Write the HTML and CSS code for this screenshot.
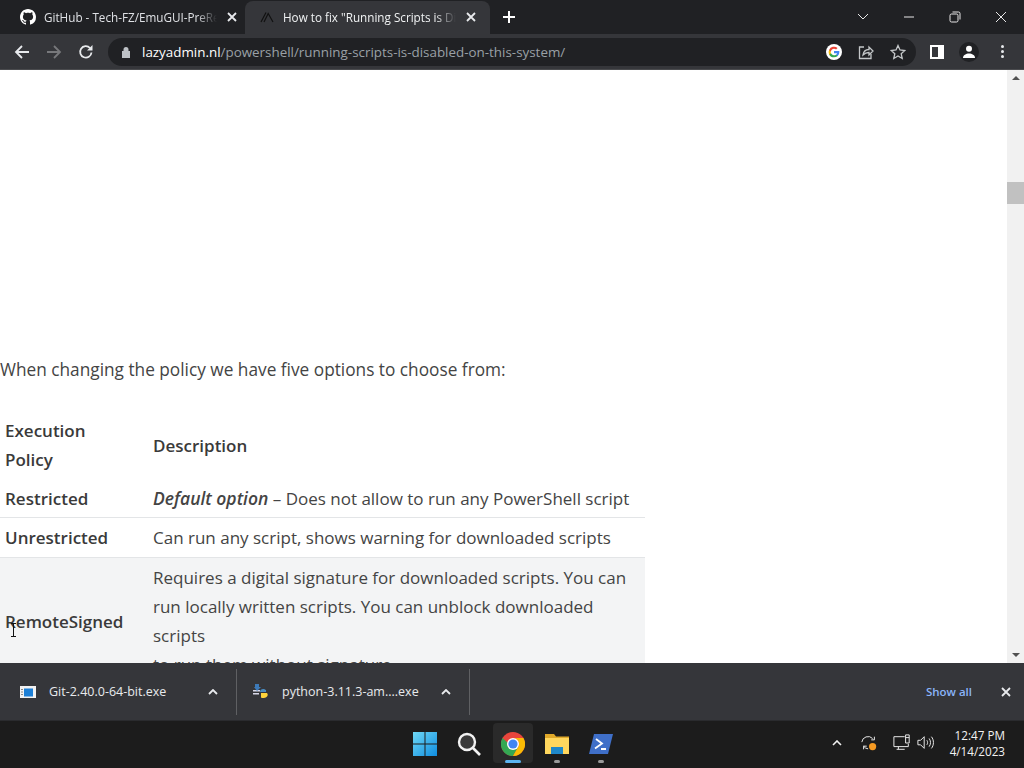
FILE: index.html
```html
<!DOCTYPE html>
<html lang="en">
<head>
    <meta charset="UTF-8">
    <meta name="viewport" content="width=device-width, initial-scale=1.0">
    <title>Running Scripts is Disabled</title>
    <link rel="stylesheet" href="styles.css">
</head>
<body>
    <div class="screen">

        <!-- Tab strip -->
        <div class="tabstrip">
            <div class="tab">
                <svg class="tab-icon" viewBox="0 0 16 16"><path fill="#fff" d="M8 0C3.58 0 0 3.58 0 8c0 3.54 2.29 6.53 5.47 7.59.4.07.55-.17.55-.38 0-.19-.01-.82-.01-1.49-2.01.37-2.53-.49-2.69-.94-.09-.23-.48-.94-.82-1.13-.28-.15-.68-.52-.01-.53.63-.01 1.08.58 1.23.82.72 1.21 1.87.87 2.33.66.07-.52.28-.87.51-1.07-1.78-.2-3.64-.89-3.64-3.95 0-.87.31-1.59.82-2.15-.08-.2-.36-1.02.08-2.12 0 0 .67-.21 2.2.82.64-.18 1.32-.27 2-.27s1.36.09 2 .27c1.53-1.04 2.2-.82 2.2-.82.44 1.1.16 1.92.08 2.12.51.56.82 1.27.82 2.15 0 3.07-1.87 3.75-3.65 3.95.29.25.54.73.54 1.48 0 1.07-.01 1.93-.01 2.2 0 .21.15.46.55.38A8.01 8.01 0 0 0 16 8c0-4.42-3.58-8-8-8z"/></svg>
                <span class="tab-title">GitHub - Tech-FZ/EmuGUI-PreRelease</span>
                <svg class="tab-close" viewBox="0 0 10 10"><path d="M1 1l8 8M9 1l-8 8"/></svg>
            </div>
            <div class="tab tab-active">
                <svg class="tab-icon" viewBox="0 0 16 16"><path fill="none" stroke="#111" stroke-width="1.200" d="M2 13L7 3.500M5 13L9.200 4.500 14 13"/></svg>
                <span class="tab-title">How to fix "Running Scripts is Disabled"</span>
                <svg class="tab-close" viewBox="0 0 10 10"><path d="M1 1l8 8M9 1l-8 8"/></svg>
            </div>
            <svg class="new-tab" viewBox="0 0 12 12"><path d="M6 0v12M0 6h12"/></svg>
            <div class="window-controls">
                <svg class="win-btn chevron" viewBox="0 0 12 8"><path d="M1 1l5 5 5-5"/></svg>
                <svg class="win-btn" viewBox="0 0 12 12"><path d="M1 6h10"/></svg>
                <svg class="win-btn" viewBox="0 0 12 12"><rect x="1" y="3" width="8" height="8" rx="1.5"/><path d="M3.5 1H9.5A1.5 1.5 0 0 1 11 2.5V8.500"/></svg>
                <svg class="win-btn" viewBox="0 0 12 12"><path d="M1 1l10 10M11 1L1 11"/></svg>
            </div>
        </div>

        <!-- Address bar -->
        <div class="toolbar">
            <div class="nav-buttons">
                <svg class="nav-icon" viewBox="0 0 16 16"><path d="M15 8H2M8 2L2 8l6 6"/></svg>
                <svg class="nav-icon disabled" viewBox="0 0 16 16"><path d="M1 8h13M8 2l6 6-6 6"/></svg>
                <svg class="nav-icon" viewBox="0 0 16 16"><path d="M13.500 8.500A5.700 5.700 0 1 1 12 4"/><path class="solid" d="M14.500 1v5.500H9z"/></svg>
            </div>
            <div class="omnibox">
                <svg class="lock" viewBox="0 0 10 12"><path d="M2.500 5V3.500a2.500 2.500 0 0 1 5 0V5H9v7H1V5z"/></svg>
                <span class="url"><b>lazyadmin.nl</b>/powershell/running-scripts-is-disabled-on-this-system/</span>
                <div class="omni-icons">
                    <svg class="google" viewBox="0 0 18 18">
                        <circle cx="9" cy="9" r="9" fill="#fff"/>
                        <path fill="#4285f4" d="M15 9.200c0-.4 0-.8-.1-1.200H9v2.300h3.400c-.1.800-.6 1.400-1.200 1.800v1.500h2A6 6 0 0 0 15 9.200z"/>
                        <path fill="#34a853" d="M9 15c1.600 0 3-.5 4.200-1.400l-2-1.500c-.6.400-1.300.6-2.200.6-1.600 0-3-1.100-3.500-2.500h-2v1.500A6 6 0 0 0 9 15z"/>
                        <path fill="#fbbc05" d="M5.500 10.700a3.700 3.700 0 0 1 0-2.400V6.800h-2a6 6 0 0 0 0 5.400z"/>
                        <path fill="#ea4335" d="M9 5.400c.9 0 1.700.3 2.300.9L13 4.500A6 6 0 0 0 3.500 6.800l2 1.500C6 6.500 7.400 5.400 9 5.400z"/>
                    </svg>
                    <svg class="omni-icon" viewBox="0 0 16 16"><path d="M6 3H1.500v11.500H13V10"/><path d="M5 11c.5-3.500 3-5.500 6-5.500V3l4 4-4 4V8.500c-2.500 0-4.500 1-6 2.500z"/></svg>
                    <svg class="omni-icon" viewBox="0 0 16 16"><path d="M8 1.500l2 4.500 4.800.5-3.600 3.200 1 4.800L8 12l-4.200 2.500 1-4.800L1.200 6.500 6 6z"/></svg>
                </div>
            </div>
            <div class="tool-icons">
                <svg class="side-panel" viewBox="0 0 14 14"><path fill="#fff" fill-rule="evenodd" d="M0 0h14v14H0zM2 2v10h6V2z"/></svg>
                <div class="avatar">
                    <svg viewBox="0 0 14 14"><circle cx="7" cy="3.800" r="3" fill="#fff"/><path fill="#fff" d="M1 13c0-3 3-4.500 6-4.500s6 1.500 6 4.500z"/></svg>
                </div>
                <div class="menu-dots"><i></i><i></i><i></i></div>
            </div>
        </div>

        <!-- Page -->
        <div class="viewport">
            <div class="page">
                <p class="intro">When changing the policy we have five options to choose from:</p>
                <table class="policy-table">
                    <thead>
                        <tr>
                            <th class="col-name">Execution<br>Policy</th>
                            <th>Description</th>
                        </tr>
                    </thead>
                    <tbody>
                        <tr class="first-row">
                            <td class="col-name">Restricted</td>
                            <td><b><i>Default option</i></b> – Does not allow to run any PowerShell script</td>
                        </tr>
                        <tr>
                            <td class="col-name">Unrestricted</td>
                            <td>Can run any script, shows warning for downloaded scripts</td>
                        </tr>
                        <tr class="shaded">
                            <td class="col-name">RemoteSigned</td>
                            <td>Requires a digital signature for downloaded scripts. You can run locally written scripts. You can unblock downloaded scripts<br>to run them without signature</td>
                        </tr>
                    </tbody>
                </table>
                <svg class="ibeam" viewBox="0 0 7 14"><path d="M1 .5h5M3.500.5v13M1 13.500h5"/></svg>
            </div>
            <div class="scrollbar">
                <div class="arrow-up"></div>
                <div class="thumb"></div>
                <div class="arrow-down"></div>
            </div>
        </div>

        <!-- Downloads -->
        <div class="downloads">
            <div class="download">
                <svg class="file-icon" viewBox="0 0 16 12">
                    <rect width="16" height="12" fill="#f2f2f2"/>
                    <rect x="4" y="2.500" width="9" height="8" fill="#1c7fd6"/>
                    <path fill="#888" d="M1 3h2v1H1zM1 5.500h2v1H1zM1 8h2v1H1z"/>
                </svg>
                <span class="file-name">Git-2.40.0-64-bit.exe</span>
                <svg class="caret" viewBox="0 0 10 6"><path d="M1 5l4-4 4 4"/></svg>
            </div>
            <div class="download">
                <svg class="file-icon python" viewBox="0 0 16 16">
                    <path fill="#d8d8e8" d="M0 6h7v1.500H0zM0 9h6v1.500H0z"/>
                    <path fill="#3d7ab8" d="M2 0h4v3h2L4 7 1 3h1z"/>
                    <path fill="#4b8bbe" d="M7 8c0-2 1.500-3 3-3s2 .5 3 1v2H9z"/>
                    <path fill="#ffd43b" d="M8 9h6c1 1 1 3-.5 4s-4 1.500-5.500.5z"/>
                </svg>
                <span class="file-name">python-3.11.3-am....exe</span>
                <svg class="caret" viewBox="0 0 10 6"><path d="M1 5l4-4 4 4"/></svg>
            </div>
            <a class="show-all">Show all</a>
            <svg class="bar-close" viewBox="0 0 10 10"><path d="M1 1l8 8M9 1l-8 8"/></svg>
        </div>

        <!-- Windows taskbar -->
        <div class="taskbar">
            <div class="task-apps">
                <div class="app">
                    <svg viewBox="0 0 24 24">
                        <defs>
                            <linearGradient id="winGrad" x1="0" y1="0" x2="1" y2="1">
                                <stop offset="0" stop-color="#6fd8f5"/>
                                <stop offset="1" stop-color="#0f8de0"/>
                            </linearGradient>
                        </defs>
                        <path fill="url(#winGrad)" d="M0 0h11.500v11.500H0zM12.500 0H24v11.500H12.500zM0 12.500h11.500V24H0zM12.500 12.500H24V24H12.500z"/>
                    </svg>
                </div>
                <div class="app">
                    <svg viewBox="0 0 24 24"><circle cx="10" cy="10" r="8" fill="#3a3a3a" stroke="#f2f2f2" stroke-width="2.400"/><path d="M16 16l7 7" stroke="#f2f2f2" stroke-width="2.600"/></svg>
                </div>
                <div class="app app-running app-focus">
                    <svg viewBox="0 0 24 24">
                        <circle cx="12" cy="12" r="12" fill="#e8453c"/>
                        <path fill="#34a853" d="M1.600 5.900A12 12 0 0 0 12 24l5.200-9H12a3 3 0 0 1-2.600-1.500z"/>
                        <path fill="#fbbc05" d="M12 24a12 12 0 0 0 10.400-18H12a6 6 0 0 1 5.200 9z"/>
                        <circle cx="12" cy="12" r="6" fill="#fff"/>
                        <circle cx="12" cy="12" r="4.600" fill="#4285f4"/>
                    </svg>
                </div>
                <div class="app app-running">
                    <svg viewBox="0 0 24 24">
                        <path fill="#e0a92a" d="M0 2h9l2 2.500h13V8H0z"/>
                        <path fill="#ffd75e" d="M0 6h24v16H0z"/>
                        <path fill="#1f88c9" d="M6 15h12v7H6z"/>
                    </svg>
                </div>
                <div class="app app-running">
                    <svg viewBox="0 0 24 24">
                        <path fill="#3f6fc8" d="M5 2h19l-5 20H0z"/>
                        <path fill="none" stroke="#fff" stroke-width="1.800" d="M7 7l6 4.500-7 5M12 17h5"/>
                    </svg>
                </div>
            </div>
            <div class="tray">
                <svg class="tray-caret" viewBox="0 0 10 6"><path d="M1 5l4-4 4 4"/></svg>
                <svg class="tray-icon sync" viewBox="0 0 20 20">
                    <path d="M2 9a7 7 0 0 1 12-4M16 3v3.500h-3.500M4 17v-3.500h3.500M4 13.500A7 7 0 0 0 9 16.500"/>
                    <circle class="dot" cx="14" cy="14" r="4"/>
                </svg>
                <svg class="tray-icon network" viewBox="0 0 20 20"><path d="M13 3H1v11h16v-3M6 14v3M4 17h9M14 1h4v9h-4zM14 4h4"/></svg>
                <svg class="tray-icon" viewBox="0 0 20 20"><path d="M1 7h3l4-4v13l-4-4H1zM11 7c1 1.500 1 3.500 0 5M13.500 5c2 2.500 2 6.500 0 9M16 3c3 3.500 3 9.500 0 13"/></svg>
                <div class="clock">
                    <span>12:47 PM</span>
                    <span>4/14/2023</span>
                </div>
            </div>
        </div>
    </div>
</body>
</html>
```

FILE: styles.css
```css
* {
    box-sizing: border-box;
}

html, body {
    margin: 0;
    height: 100%;
    overflow: hidden;
}

body {
    font-family: "Open Sans", sans-serif;
}

svg {
    display: block;
    flex-shrink: 0;
}

.screen {
    display: flex;
    flex-direction: column;
    height: 768px;
}

/* Tab strip */
.tabstrip {
    display: flex;
    align-items: flex-end;
    height: 34px;
    padding-left: 8px;
    background-color: #202124;
}

.tab {
    display: flex;
    align-items: center;
    width: 237px;
    height: 33px;
    padding-left: 12px;
    padding-bottom: 1px;
    color: #dfe1e5;
    font-size: 11.700px;
}

.tab-active {
    width: 245px;
    padding-left: 14px;
    padding-right: 6px;
    color: #f1f3f4;
    background-color: #35363a;
    border-radius: 8px 8px 0 0;
}

.tab-icon {
    width: 16px;
    height: 16px;
    margin-right: 8px;
}

.tab-title {
    flex: 1;
    overflow: hidden;
    white-space: nowrap;
    -webkit-mask-image: linear-gradient(to right, #000 88%, transparent 100%);
    mask-image: linear-gradient(to right, #000 88%, transparent 100%);
}

.tab-close {
    width: 10px;
    height: 10px;
    margin: 0 8px 0 10px;
    fill: none;
    stroke: #e8eaed;
    stroke-width: 1.800;
}

.new-tab {
    width: 12px;
    height: 12px;
    margin: 0 0 11px 13px;
    fill: none;
    stroke: #fff;
    stroke-width: 2;
}

.window-controls {
    display: flex;
    align-items: center;
    gap: 34px;
    margin-left: auto;
    margin-right: 17px;
    align-self: center;
}

.win-btn {
    width: 12px;
    height: 12px;
    fill: none;
    stroke: #e8e8e8;
    stroke-width: 1;
}

.chevron {
    height: 8px;
}

/* Toolbar */
.toolbar {
    display: flex;
    align-items: center;
    height: 36px;
    background-color: #35363a;
    border-bottom: 1px solid #4a4b4e;
}

.nav-buttons {
    display: flex;
    gap: 16px;
    padding-left: 14px;
}

.nav-icon {
    width: 16px;
    height: 16px;
    fill: none;
    stroke: #e8eaed;
    stroke-width: 1.800;
}

.nav-icon .solid {
    fill: #e8eaed;
    stroke: none;
}

.nav-icon.disabled {
    stroke: #77787b;
}

.omnibox {
    display: flex;
    align-items: center;
    width: 808px;
    height: 28px;
    margin-left: 14px;
    padding: 0 10px 0 13px;
    background-color: #202124;
    border-radius: 14px;
}

.lock {
    width: 10px;
    height: 12px;
    margin-right: 11px;
    fill: #bdc1c6;
}

.url {
    color: #9aa0a6;
    font-size: 13.400px;
    white-space: nowrap;
}

.url b {
    color: #fff;
    font-weight: 400;
}

.omni-icons {
    display: flex;
    align-items: center;
    gap: 16px;
    margin-left: auto;
}

.google {
    width: 16px;
    height: 16px;
}

.omni-icon {
    width: 16px;
    height: 16px;
    fill: none;
    stroke: #c4c7c9;
    stroke-width: 1.300;
}

.tool-icons {
    display: flex;
    align-items: center;
    margin-left: 14px;
}

.side-panel {
    width: 14px;
    height: 14px;
}

.avatar {
    width: 20px;
    height: 20px;
    margin-left: 15px;
    padding: 3px;
    background-color: #202124;
    border-radius: 50%;
}

.menu-dots {
    display: flex;
    flex-direction: column;
    gap: 2px;
    margin-left: 22px;
}

.menu-dots i {
    width: 3px;
    height: 3px;
    background-color: #e8eaed;
    border-radius: 50%;
}

/* Page area */
.viewport {
    flex: 1;
    display: flex;
    min-height: 0;
    background-color: #fff;
}

.page {
    position: relative;
    flex: 1;
    overflow: hidden;
    padding-top: 285px;
    color: #444;
    font-size: 17px;
    line-height: 29px;
}

.intro {
    margin: 0 0 27px;
    font-size: 17.250px;
}

.policy-table {
    width: 645px;
    table-layout: fixed;
    border-collapse: collapse;
}

.policy-table th,
.policy-table td {
    padding: 5px;
    text-align: left;
    font-weight: 400;
}

.policy-table th {
    color: #3a3a3a;
    font-weight: 600;
}

.policy-table b {
    font-size: 17.500px;
    font-weight: 600;
}

.policy-table tbody tr {
    border-bottom: 1px solid #e3e5e7;
}

.policy-table .first-row td {
    padding-bottom: 4px;
}

.policy-table .col-name {
    width: 148px;
    color: #3a3a3a;
    font-weight: 600;
}

.shaded {
    background-color: #f3f4f5;
}

.ibeam {
    position: absolute;
    left: 10px;
    top: 553px;
    width: 7px;
    height: 14px;
    fill: none;
    stroke: #111;
}

.scrollbar {
    display: flex;
    flex-direction: column;
    align-items: center;
    width: 17px;
    background-color: #f1f1f1;
}

.arrow-up {
    margin-top: 6px;
    border-left: 4px solid transparent;
    border-right: 4px solid transparent;
    border-bottom: 4px solid #505050;
}

.thumb {
    width: 100%;
    height: 22px;
    margin-top: 102px;
    background-color: #c1c1c1;
}

.arrow-down {
    margin-top: auto;
    margin-bottom: 6px;
    border-left: 4px solid transparent;
    border-right: 4px solid transparent;
    border-top: 4px solid #505050;
}

/* Download shelf */
.downloads {
    display: flex;
    align-items: center;
    height: 58px;
    padding: 6px 0;
    background-color: #35363a;
    border-bottom: 1px solid #2a2b2e;
}

.download {
    display: flex;
    align-items: center;
    width: 237px;
    height: 46px;
    padding-left: 20px;
    border-right: 1px solid #5f6063;
    color: #e8eaed;
    font-size: 12.500px;
}

.download + .download {
    width: 233px;
    padding-left: 16px;
}

.file-icon {
    width: 16px;
    height: 12px;
    margin-right: 13px;
}

.file-icon.python {
    height: 16px;
}

.file-name {
    flex: 1;
}

.caret {
    width: 10px;
    height: 6px;
    margin-right: 18px;
    fill: none;
    stroke: #e8eaed;
    stroke-width: 1.800;
}

.show-all {
    margin-left: auto;
    color: #8ab4f8;
    font-size: 11.500px;
    font-weight: 600;
}

.bar-close {
    width: 10px;
    height: 10px;
    margin: 0 13px 0 29px;
    fill: none;
    stroke: #e8eaed;
    stroke-width: 1.800;
}

/* Windows taskbar */
.taskbar {
    display: grid;
    grid-template-columns: 1fr auto 1fr;
    align-items: center;
    height: 47px;
    padding-bottom: 3px;
    background-color: #1c1c1c;
}

.task-apps {
    grid-column: 2;
    display: flex;
    padding-left: 2px;
}

.app {
    position: relative;
    display: flex;
    align-items: center;
    justify-content: center;
    width: 40px;
    height: 40px;
    margin: 0 2px;
    padding-top: 2px;
}

.app svg {
    width: 24px;
    height: 24px;
}

.app-focus {
    background-color: #2a2a2a;
    border-radius: 4px;
}

.app-running::after {
    content: "";
    position: absolute;
    left: 17px;
    bottom: 0;
    width: 6px;
    height: 3px;
    background-color: #9a9a9a;
    border-radius: 2px;
}

.app-focus::after {
    left: 12px;
    width: 16px;
    background-color: #5cb4f0;
}

.tray {
    grid-column: 3;
    display: flex;
    align-items: center;
    justify-content: flex-end;
    padding-right: 19px;
}

.tray-caret {
    width: 10px;
    height: 6px;
    margin-right: 18px;
    fill: none;
    stroke: #f0f0f0;
    stroke-width: 1.600;
}

.tray-icon {
    width: 18px;
    height: 18px;
    margin-right: 7px;
    fill: none;
    stroke: #e8e8e8;
    stroke-width: 1.100;
}

.tray-icon .dot {
    fill: #f59a23;
    stroke: none;
}

.sync {
    margin-right: 15px;
}

.network {
    margin-right: 6px;
}

.clock {
    display: flex;
    flex-direction: column;
    align-items: flex-end;
    margin-left: 8px;
    color: #f2f2f2;
    font-size: 11.700px;
    line-height: 16px;
}
```
